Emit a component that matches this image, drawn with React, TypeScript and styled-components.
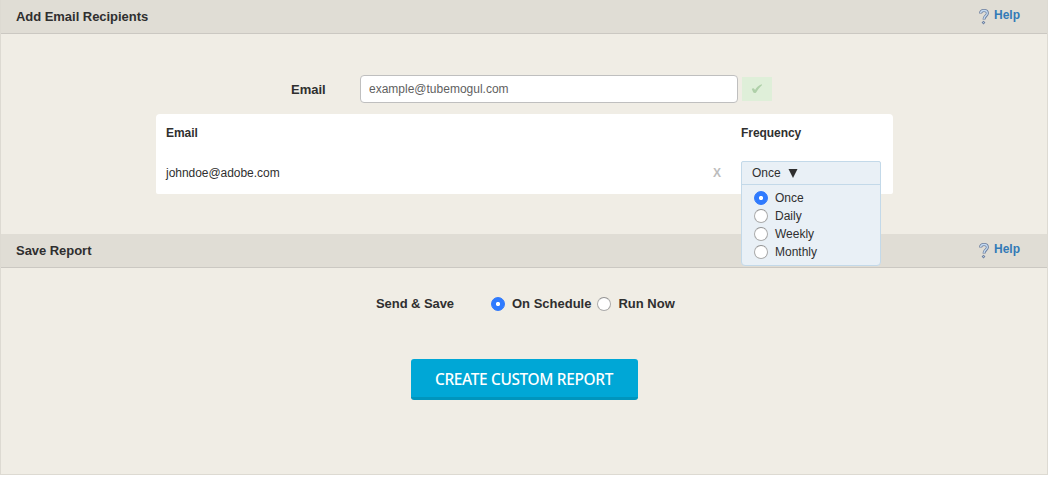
import React, { useState } from 'react';
import styled, { createGlobalStyle } from 'styled-components';

const Global = createGlobalStyle`
  *, *::before, *::after { box-sizing: border-box; }
  body { margin: 0; background: #fff; }
`;

const Page = styled.main`
  height: 475px;
  background: #f0ede5;
  border: 1px solid #dddad2;
  border-top: 0;
  color: #2f2f2f;
  font: 12px/16px 'Liberation Sans', Arial, sans-serif;
`;

const Section = styled.section<{ $height: number }>`
  height: ${(p) => p.$height}px;
`;

const SectionHeader = styled.header`
  display: flex;
  justify-content: space-between;
  height: 34px;
  padding: 8px 27px 0 15px;
  background: #e0ddd5;
  border-bottom: 1px solid #cbc8c2;
`;

const Title = styled.h2`
  margin: 0;
  font-size: 13px;
  line-height: 17px;
  font-weight: bold;
  letter-spacing: -0.04px;
`;

const HelpLink = styled.a`
  display: flex;
  gap: 5px;
  height: 16px;
  color: #337ab7;
  font-size: 12px;
  line-height: 14px;
  font-weight: bold;
  text-decoration: none;
`;

const HelpGlyph = styled.svg`
  flex: none;
  margin-top: 1px;
`;

const EmailRow = styled.div`
  display: flex;
  padding: 41px 0 0 290px;
`;

const EmailLabel = styled.label`
  width: 69px;
  padding-top: 6px;
  font-size: 13px;
  line-height: 17px;
  font-weight: bold;
`;

const EmailInput = styled.input`
  width: 378px;
  height: 28px;
  padding: 0 8px 1px;
  border: 1px solid #bfbfbf;
  border-radius: 4px;
  background: #fff;
  font: 12px/16px 'Liberation Sans', Arial, sans-serif;
  &::placeholder { color: #5f5f5f; opacity: 1; }
`;

const AddButton = styled.button`
  display: flex;
  align-items: center;
  justify-content: center;
  width: 30px;
  height: 24px;
  margin: 2px 0 0 4px;
  padding: 0;
  border: 0;
  background: #dfefd9;
`;

const Recipients = styled.div`
  display: grid;
  grid-template-columns: 546px 29px 1fr;
  grid-template-rows: 36px 1fr;
  width: 737px;
  height: 80px;
  margin: 11px 0 0 155px;
  padding: 11px 12px 0 10px;
  border-radius: 4px 4px 2px 2px;
  background: #fff;
`;

const ColumnHead = styled.div<{ $wide?: boolean }>`
  grid-column: ${(p) => (p.$wide ? 'span 2' : 'auto')};
  font-weight: bold;
  letter-spacing: -0.05px;
`;

const Address = styled.div`
  padding-top: 4px;
  letter-spacing: -0.04px;
`;

const Remove = styled.button`
  align-self: start;
  justify-self: start;
  margin: 4px 0 0 1px;
  padding: 0;
  border: 0;
  background: none;
  color: #bdbdbd;
  font: bold 12px/16px 'Liberation Sans', Arial, sans-serif;
`;

const FrequencyCell = styled.div`
  position: relative;
  height: 24px;
`;

const FrequencyMenu = styled.div`
  position: absolute;
  top: 0;
  left: 0;
  width: 140px;
  height: 105px;
  border: 1px solid #c3d9e9;
  border-radius: 2px 2px 4px 4px;
  background: #e9f0f6;
`;

const Selected = styled.div`
  display: flex;
  align-items: center;
  gap: 7px;
  height: 23px;
  padding-left: 10px;
  border-bottom: 1px solid #c3d9e9;
`;

const Options = styled.div`
  padding: 4px 0 0 12px;
`;

const RadioLabel = styled.label<{ $strong?: boolean }>`
  display: flex;
  align-items: center;
  gap: 7px;
  height: 18px;
  font-size: ${(p) => (p.$strong ? 13 : 12)}px;
  font-weight: ${(p) => (p.$strong ? 'bold' : 'normal')};
`;

const Radio = styled.input`
  appearance: none;
  flex: none;
  width: 14px;
  height: 14px;
  margin: 0;
  border: 1px solid #aaa;
  border-top-color: #929292;
  border-radius: 50%;
  background: #fff;
  &:checked {
    border-color: #2f78fb;
    background: radial-gradient(circle, #fff 0 1.7px, #2f7bff 2.5px);
  }
`;

const SaveRow = styled.div`
  display: flex;
  align-items: center;
  height: 18px;
  margin: 27px 0 0 375px;
`;

const SaveLabel = styled.div`
  width: 115px;
  font-size: 13px;
  font-weight: bold;
  letter-spacing: -0.07px;
`;

const SaveOptions = styled.div`
  display: flex;
  gap: 6px;
`;

const CreateButton = styled.button`
  display: block;
  width: 227px;
  height: 41px;
  margin: 46px 0 0 410px;
  padding: 3px 1px 0 0;
  border: 0;
  border-bottom: 3px solid #0095bd;
  border-radius: 3px;
  background: #00a7d6;
  color: #fff;
  font: 500 15.4px/20px 'Noto Sans', 'Open Sans', sans-serif;
  letter-spacing: -0.33px;
  white-space: nowrap;
`;

function Help() {
  return (
    <HelpLink>
      <HelpGlyph width="10" height="16" viewBox="0 0 10 16" fill="none">
        <path d="M1.6 4.6C1.6 2.5 3 1.5 4.9 1.5c2.1 0 3.5 1 3.5 2.8 0 2.5-3.4 2.8-3.4 6.2" stroke="#6c7f9f" strokeWidth="3" />
        <path d="M1.6 4C1.8 2.4 3.1 1.5 4.9 1.5c2 0 3.4 1 3.4 2.7 0 2.5-3.3 2.7-3.3 5.8" stroke="#c5dbf2" strokeWidth="1.3" />
        <path d="M4.5 11.7l1.9 1.9-1.9 1.9-1.9-1.9z" fill="#6c7f9f" />
        <path d="M4.5 12.9l.7.7-.7.7-.7-.7z" fill="#c5dbf2" />
      </HelpGlyph>
      Help
    </HelpLink>
  );
}

const frequencies = ['Once', 'Daily', 'Weekly', 'Monthly'];
const saveModes = ['On Schedule', 'Run Now'];

export default function App() {
  const [frequency, setFrequency] = useState('Once');
  const [mode, setMode] = useState('On Schedule');
  return (
    <>
      <Global />
      <Page>
        <Section $height={234}>
          <SectionHeader>
            <Title>Add Email Recipients</Title>
            <Help />
          </SectionHeader>
          <EmailRow>
            <EmailLabel htmlFor="email">Email</EmailLabel>
            <EmailInput id="email" placeholder="example@tubemogul.com" />
            <AddButton aria-label="Add">
              <svg width="12" height="10" viewBox="0 0 12 10">
                <path d="M.8 4.9C1.5 4 2.9 4 3.4 4.9l.6 1.2C5.8 3.3 7.6 1.4 10.6.3l.5.7C8.7 3.1 6.8 5.7 5.1 8.4c-.6.8-2.4.8-2.9-.1z" fill="#afd0a9" />
              </svg>
            </AddButton>
          </EmailRow>
          <Recipients>
            <ColumnHead $wide>Email</ColumnHead>
            <ColumnHead>Frequency</ColumnHead>
            <Address>johndoe@adobe.com</Address>
            <Remove>X</Remove>
            <FrequencyCell>
              <FrequencyMenu>
                <Selected>
                  Once
                  <svg width="10" height="9" viewBox="0 0 10 9">
                    <path d="M.5 0h9L5 9z" fill="#2f2f2f" />
                  </svg>
                </Selected>
                <Options>
                  {frequencies.map((f) => (
                    <RadioLabel key={f}>
                      <Radio type="radio" name="frequency" checked={frequency === f} onChange={() => setFrequency(f)} />
                      {f}
                    </RadioLabel>
                  ))}
                </Options>
              </FrequencyMenu>
            </FrequencyCell>
          </Recipients>
        </Section>
        <Section $height={240}>
          <SectionHeader>
            <Title>Save Report</Title>
            <Help />
          </SectionHeader>
          <SaveRow>
            <SaveLabel>Send &amp; Save</SaveLabel>
            <SaveOptions>
              {saveModes.map((m) => (
                <RadioLabel key={m} $strong>
                  <Radio type="radio" name="mode" checked={mode === m} onChange={() => setMode(m)} />
                  {m}
                </RadioLabel>
              ))}
            </SaveOptions>
          </SaveRow>
          <CreateButton>CREATE CUSTOM REPORT</CreateButton>
        </Section>
      </Page>
    </>
  );
}
